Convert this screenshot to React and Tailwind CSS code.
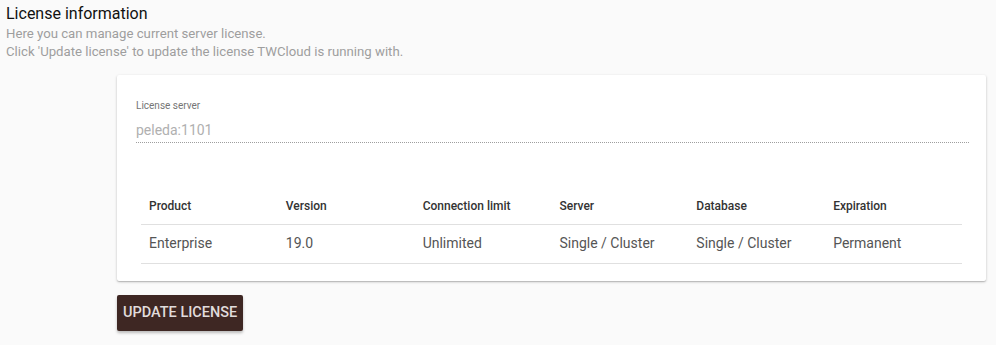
import React from 'react';

const COLUMNS = ['Product', 'Version', 'Connection limit', 'Server', 'Database', 'Expiration'];
const ROW = ['Enterprise', '19.0', 'Unlimited', 'Single / Cluster', 'Single / Cluster', 'Permanent'];

export default function App() {
  return (
    <div className="w-[996px] h-[345px] bg-[#fafafa] overflow-hidden" style={{ fontFamily: 'Roboto, "Liberation Sans", sans-serif' }}>
      {/* Heading */}
      <div className="pl-[6px] pt-[4px]">
        <h1 className="text-[16px] leading-[20px] text-[#111]">License information</h1>
        <p className="mt-[1px] text-[13.2px] leading-[18px] text-[#9e9e9e]">Here you can manage current server license.</p>
        <p className="text-[13.2px] leading-[18px] text-[#9e9e9e]">Click 'Update license' to update the license TWCloud is running with.</p>
      </div>

      <div className="ml-[117px] mr-[10px] mt-[14px]">
        {/* Card */}
        <div className="bg-white rounded-[2px] shadow-[0_1px_3px_rgba(0,0,0,0.2),0_1px_1px_rgba(0,0,0,0.14)] pt-[24px] pb-[17px] pl-[19px] pr-[17px]">
          <div>
            <label className="block text-[10px] leading-[14px] text-[#757575]">License server</label>
            <div className="mt-[8px] pb-[3px] text-[14px] leading-[18px] text-[#b0b0b0] border-b border-dotted border-[#9e9e9e]">peleda:1101</div>
          </div>

          <table className="mt-[46px] ml-[5px] w-[821px] table-fixed border-collapse">
            <thead>
              <tr className="border-b border-[#e0e0e0]">
                {COLUMNS.map((c) => (
                  <th key={c} className="h-[35px] pl-[8px] text-left text-[12px] font-medium text-[#333]">{c}</th>
                ))}
              </tr>
            </thead>
            <tbody>
              <tr className="border-b border-[#e0e0e0]">
                {ROW.map((v, i) => (
                  <td key={i} className="h-[39px] pl-[8px] text-[14px] text-[#555]">{v}</td>
                ))}
              </tr>
            </tbody>
          </table>
        </div>

        <button className="mt-[14px] h-[36px] px-[6px] rounded-[2px] bg-[#3e2723] text-[14.5px] font-medium text-[#e0dcdc] shadow-[0_2px_3px_rgba(0,0,0,0.25)]">
          UPDATE LICENSE
        </button>
      </div>
    </div>
  );
}
